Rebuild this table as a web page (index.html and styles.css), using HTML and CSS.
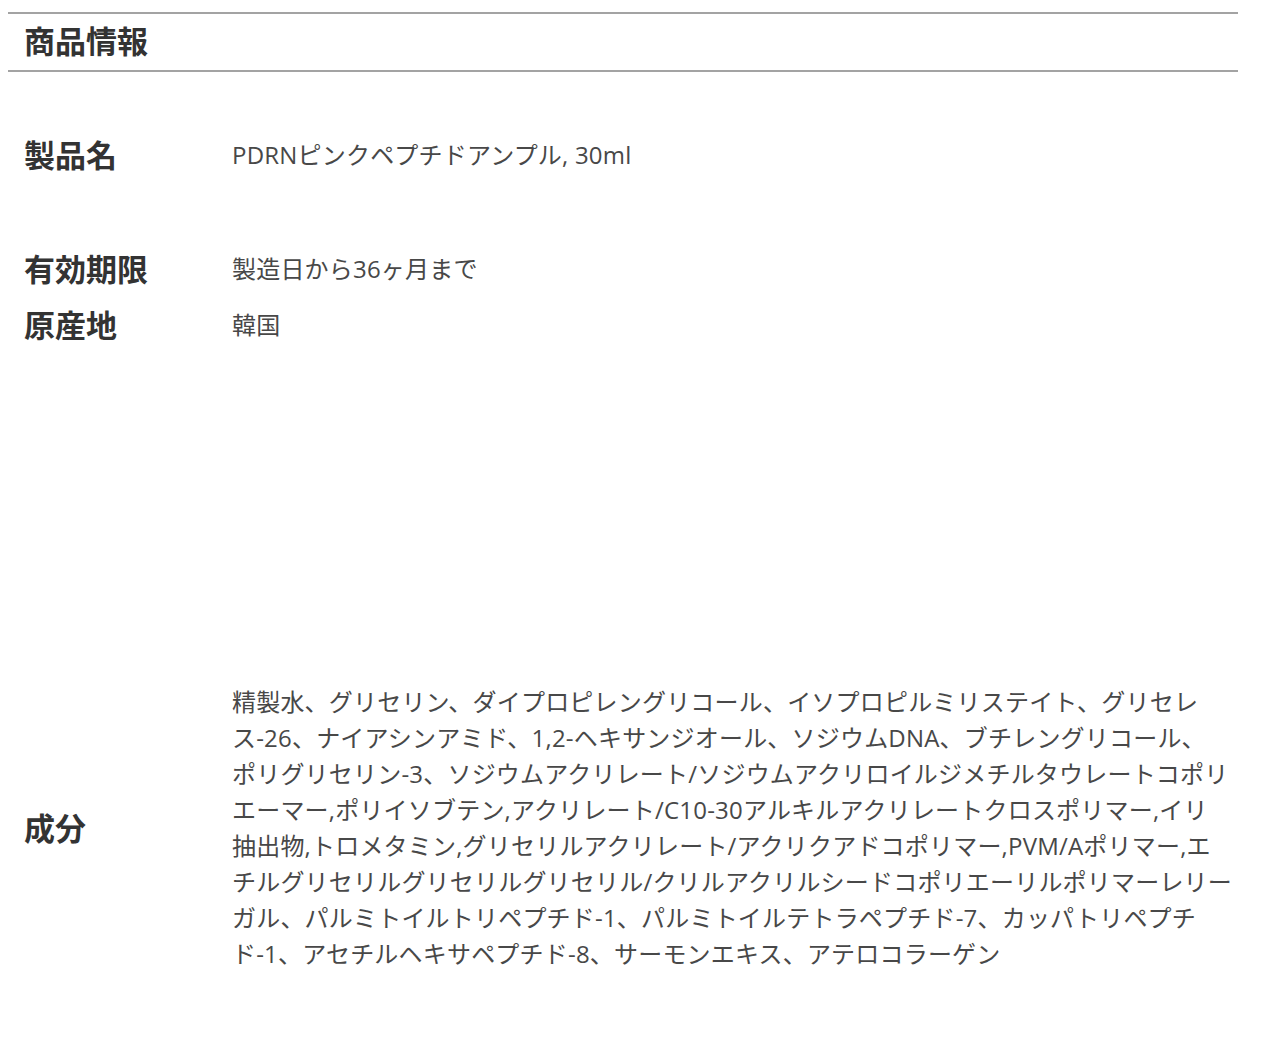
FILE: index.html
```html
<!DOCTYPE html>
<html lang="ja">
<head>
    <meta charset="UTF-8">
    <meta name="viewport" content="width=device-width, initial-scale=1.0">
    <title>商品情報</title>
    <link rel="stylesheet" href="styles.css">
</head>
<body>
    <div class="info">
        <div class="info-title">商品情報</div>

        <div class="row first">
            <div class="label">製品名</div>
            <div class="value">PDRNピンクペプチドアンプル, 30ml</div>
        </div>
        <div class="row second">
            <div class="label">有効期限</div>
            <div class="value">製造日から36ヶ月まで</div>
        </div>
        <div class="row">
            <div class="label">原産地</div>
            <div class="value">韓国</div>
        </div>
        <div class="row ingredients">
            <div class="label">成分</div>
            <div class="value">精製水、グリセリン、ダイプロピレングリコール、イソプロピルミリステイト、グリセレ<br>ス-26、ナイアシンアミド、1,2-ヘキサンジオール、ソジウムDNA、ブチレングリコール、<br>ポリグリセリン-3、ソジウムアクリレート/ソジウムアクリロイルジメチルタウレートコポリ<br>エーマー,ポリイソブテン,アクリレート/C10-30アルキルアクリレートクロスポリマー,イリ<br>抽出物,トロメタミン,グリセリルアクリレート/アクリクアドコポリマー,PVM/Aポリマー,エ<br>チルグリセリルグリセリルグリセリル/クリルアクリルシードコポリエーリルポリマーレリー<br>ガル、パルミトイルトリペプチド-1、パルミトイルテトラペプチド-7、カッパトリペプチ<br>ド-1、アセチルヘキサペプチド-8、サーモンエキス、アテロコラーゲン</div>
        </div>
    </div>
</body>
</html>
```

FILE: styles.css
```css
body {
    margin: 0;
    padding: 0;
    background-color: #fff;
    font-family: "Noto Sans CJK JP", "Noto Sans", sans-serif;
}
.info {
    width: 1230px;
    margin: 12px 0 0 8px;
    padding-bottom: 80px;
}
.info-title {
    border-top: 2px solid #a3a3a3;
    border-bottom: 2px solid #a3a3a3;
    height: 52px;
    line-height: 52px;
    padding: 0 0 4px 16px;
    font-size: 31px;
    font-weight: bold;
    color: #333;
}
.row {
    display: grid;
    grid-template-columns: 208px 1fr;
    align-items: center;
    min-height: 56px;
    padding-left: 16px;
}
.row.first {
    margin-top: 55px;
}
.row.second {
    margin-top: 58px;
}
.row.ingredients {
    margin-top: 331px;
}
.label {
    font-size: 31px;
    font-weight: bold;
    color: #333;
    margin-bottom: 4px;
}
.value {
    font-family: "Open Sans", "Noto Sans CJK JP", sans-serif;
    font-size: 24px;
    line-height: 36px;
    color: #484848;
    letter-spacing: 0.2px;
    white-space: nowrap;
}
```
